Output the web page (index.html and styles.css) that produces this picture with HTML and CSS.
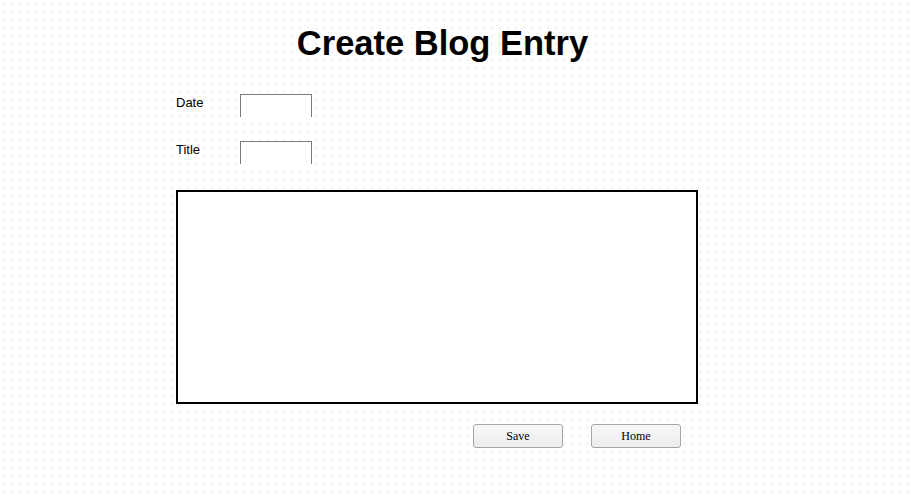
FILE: index.html
```html
<!DOCTYPE html>
<html>
<head>
<meta charset="utf-8">
<link rel="stylesheet" href="styles.css">
</head>
<body>
<div class="page">
  <h1 class="heading">Create Blog Entry</h1>
  <div class="field">
    <label class="label">Date</label>
    <input class="input" type="text">
  </div>
  <div class="field">
    <label class="label">Title</label>
    <input class="input" type="text">
  </div>
  <textarea class="entry"></textarea>
  <div class="actions">
    <button class="btn">Save</button>
    <button class="btn">Home</button>
  </div>
</div>
</body>
</html>
```
FILE: styles.css
```css
html, body {
  margin: 0;
  padding: 0;
}
body {
  width: 911px;
  height: 497px;
  background-color: #ffffff;
  background-image: radial-gradient(circle at 4px 4px, #efefef 0, #f2f2f2 1px, rgba(255,255,255,0) 1.6px);
  background-size: 8px 8px;
  font-family: "Liberation Sans", Arial, sans-serif;
  overflow: hidden;
}
.page {
  margin-left: 176px;
  width: 522px;
  display: flex;
  flex-direction: column;
}
.heading {
  margin: 0;
  padding-top: 25px;
  padding-left: 11px;
  height: 36px;
  line-height: 36px;
  font-size: 34.5px;
  font-weight: bold;
  text-align: center;
  color: #000;
}
.field {
  display: flex;
  align-items: flex-start;
  margin-top: 33px;
  height: 23px;
}
.field + .field {
  margin-top: 24px;
}
.label {
  width: 64px;
  font-size: 13px;
  line-height: 15px;
  padding-top: 1px;
  color: #000;
}
.input {
  box-sizing: border-box;
  width: 72px;
  height: 23px;
  margin: 0;
  padding: 0 2px;
  border: 1px solid #7a7a7a;
  border-bottom: none;
  background: #fff;
  outline: none;
}
.entry {
  box-sizing: border-box;
  display: block;
  margin: 26px 0 0 0;
  width: 522px;
  height: 214px;
  border: 2px solid #000;
  background: #fff;
  resize: none;
  outline: none;
}
.actions {
  display: flex;
  justify-content: flex-end;
  gap: 28px;
  padding-right: 17px;
  margin-top: 20px;
}
.btn {
  box-sizing: border-box;
  width: 90px;
  height: 24px;
  margin: 0;
  padding: 1px 0 0 0;
  border: 1px solid #a6a6a6;
  border-radius: 3px;
  background: linear-gradient(#f7f7f7, #ececec);
  font-family: "Liberation Serif", "Times New Roman", serif;
  font-size: 12px;
  color: #000;
}
```
